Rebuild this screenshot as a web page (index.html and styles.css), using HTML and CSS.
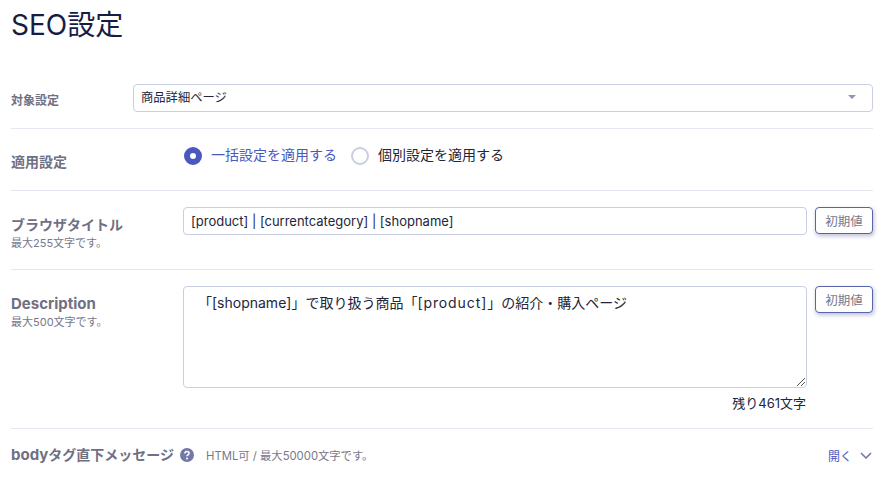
FILE: index.html
```html
<!DOCTYPE html>
<html lang="ja">

<head>
    <meta charset="utf-8">
    <title>SEO設定</title>
    <link rel="stylesheet" href="styles.css">
</head>

<body>
    <h1>SEO設定</h1>

    <div class="row row_target">
        <label class="label_small">対象設定</label>
        <div class="select">
            <span>商品詳細ページ</span>
            <svg width="8" height="4" viewBox="0 0 8 4"><path d="M0 0h8L4 4z" fill="#8f93b8"/></svg>
        </div>
    </div>

    <div class="row row_radio">
        <label class="label_title">適用設定</label>
        <div class="radios">
            <span class="radio radio_on"></span>
            <span class="radio_txt radio_txt_on">一括設定を適用する</span>
            <span class="radio"></span>
            <span class="radio_txt">個別設定を適用する</span>
        </div>
    </div>

    <div class="row row_browser">
        <div class="label_col">
            <label class="label_big">ブラウザタイトル</label>
            <p class="hint">最大255文字です。</p>
        </div>
        <div class="field">[product] | [currentcategory] | [shopname]</div>
        <button>初期値</button>
    </div>

    <div class="row row_desc">
        <div class="label_col">
            <label class="label_big label_latin">Description</label>
            <p class="hint">最大500文字です。</p>
        </div>
        <div class="desc_col">
            <div class="field field_area">
                「[shopname]」で取り扱う商品「<span class="wide">[product]</span>」の紹介・購入ページ
                <svg class="grip" width="9" height="9" viewBox="0 0 9 9"><path d="M1 9L9 1M5 9l4-4" stroke="#555" fill="none"/></svg>
            </div>
            <p class="remain">残り461文字</p>
        </div>
        <button>初期値</button>
    </div>

    <div class="row row_body">
        <label class="label_big"><span class="label_latin">body</span>タグ直下メッセージ</label>
        <svg class="help" width="14" height="14" viewBox="0 0 14 14">
            <circle cx="7" cy="7" r="7" fill="#7478a8"/>
            <path d="M4.9 5.4C4.9 4.2 5.8 3.5 7 3.5s2.1.7 2.1 1.8c0 1.5-2.1 1.5-2.1 3" stroke="#fff" stroke-width="1.6" fill="none"/>
            <circle cx="7" cy="10.4" r="1" fill="#fff"/>
        </svg>
        <span class="hint body_hint">HTML可 / 最大50000文字です。</span>
        <a class="open">開く</a>
        <svg class="chevron" width="12" height="7" viewBox="0 0 12 7"><path d="M1 1l5 5 5-5" stroke="#7478a8" stroke-width="1.6" fill="none"/></svg>
    </div>
</body>

</html>
```

FILE: styles.css
```css
* {
    box-sizing: border-box;
    font-family: 'Inter', 'Noto Sans CJK JP', sans-serif;
    margin: 0;
}

body {
    background-color: #fff;
    color: #23253a;
    font-size: 12px;
    padding: 0 15px 0 11px;
}

h1 {
    font-size: 28px;
    font-weight: 400;
    line-height: 30px;
    color: #171c45;
    padding-top: 10px;
    height: 84px;
}

.row {
    display: flex;
    border-bottom: 1px solid #e6e7f1;
}

.row_target {
    height: 45px;
}

.row_radio {
    height: 62px;
    padding-top: 16px;
}

.row_browser {
    height: 79px;
    padding-top: 16px;
}

.row_desc {
    height: 159px;
    padding-top: 16px;
}

.row_body {
    border-bottom: none;
    align-items: center;
    height: 52px;
}

.label_small {
    width: 122px;
    font-size: 12px;
    font-weight: 700;
    color: #6f7083;
    padding-top: 7px;
}

.label_title {
    width: 173px;
    font-size: 14px;
    font-weight: 700;
    color: #6f7083;
    padding-top: 6px;
}

.label_col {
    width: 172px;
    padding-top: 8px;
}

.label_big {
    font-size: 14px;
    line-height: 20px;
    font-weight: 700;
    color: #6f7083;
}

.label_latin {
    font-size: 15px;
}

.hint {
    font-size: 11px;
    color: #77788a;
    line-height: 14px;
    margin-top: 1px;
}

.select {
    flex: 1;
    height: 28px;
    display: flex;
    justify-content: space-between;
    align-items: center;
    padding: 0 16px 2px 7px;
    font-size: 12.3px;
    border: 1px solid #c9cee2;
    border-radius: 4px;
}

.radios {
    display: flex;
    align-items: flex-start;
}

.radio {
    width: 18px;
    height: 18px;
    border: 2px solid #c9cee2;
    border-radius: 50%;
    margin: 2px 9px 0 0;
}

.radio_on {
    border: 6px solid #4a58c0;
    background-color: #fff;
}

.radio_txt {
    font-size: 14px;
    line-height: 20px;
    margin-right: 14px;
}

.radio_txt_on {
    color: #4a58c0;
}

.field {
    width: 624px;
    height: 28px;
    font-size: 13px;
    line-height: 27px;
    padding: 0 7px;
    border: 1px solid #c9cee2;
    border-radius: 4px;
}

.field_area {
    position: relative;
    height: 102px;
    font-size: 14px;
    line-height: 32px;
    padding: 0 7px 0 14px;
}

.wide {
    letter-spacing: 0.9px;
}

.grip {
    position: absolute;
    right: 1px;
    bottom: 1px;
}

.remain {
    text-align: right;
    font-size: 13px;
    line-height: 16px;
    padding: 7px 1px 0 0;
}

button {
    width: 58px;
    height: 27px;
    margin-left: 8px;
    border: 1px solid #5a64a8;
    border-radius: 4px;
    background-color: #fff;
    color: #77788a;
    font-size: 12.5px;
    padding: 0;
    box-shadow: 1px 2px 4px rgba(60, 70, 140, 0.35);
}

.help {
    margin-left: 6px;
}

.body_hint {
    margin: 2px 0 0 12px;
    flex: 1;
    font-size: 11.3px;
}

.open {
    color: #4a58c0;
    font-size: 12px;
}

.chevron {
    margin: 0 1px 0 8px;
}
```
